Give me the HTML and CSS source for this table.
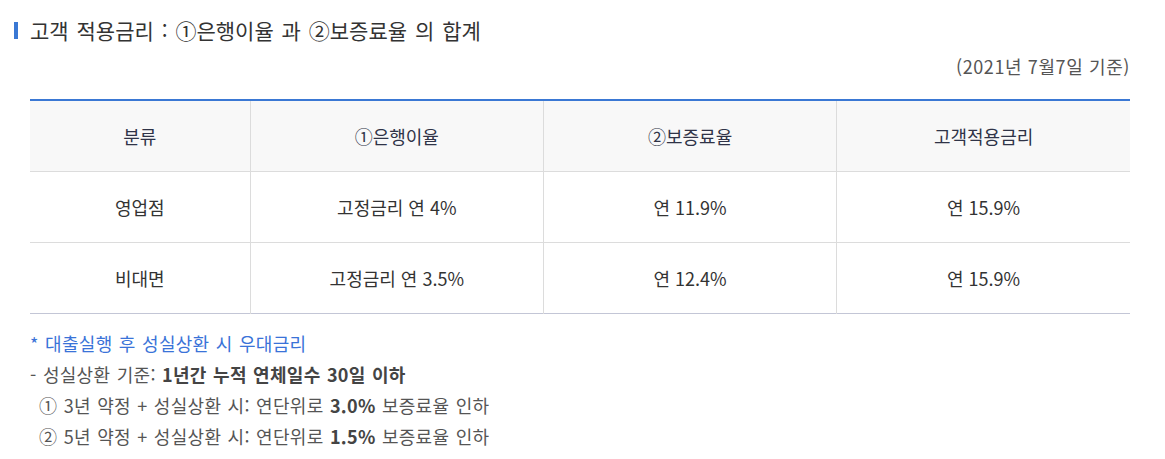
FILE: index.html
```html
<!DOCTYPE html>
<html lang="ko">

<head>
    <meta charset="UTF-8">
    <title>고객 적용금리</title>
    <link rel="stylesheet" href="styles.css">
</head>

<body>
    <div class="rate-box">
        <h3 class="rate-title">고객 적용금리 : ①은행이율 과 ②보증료율 의 합계</h3>
        <p class="rate-date">(2021년 7월7일 기준)</p>

        <table class="rate-table">
            <colgroup>
                <col class="col-type">
                <col class="col-rate">
                <col class="col-rate">
                <col class="col-rate">
            </colgroup>
            <thead>
                <tr>
                    <th>분류</th>
                    <th>①은행이율</th>
                    <th>②보증료율</th>
                    <th>고객적용금리</th>
                </tr>
            </thead>
            <tbody>
                <tr>
                    <td>영업점</td>
                    <td>고정금리 연 4%</td>
                    <td>연 11.9%</td>
                    <td>연 15.9%</td>
                </tr>
                <tr>
                    <td>비대면</td>
                    <td>고정금리 연 3.5%</td>
                    <td>연 12.4%</td>
                    <td>연 15.9%</td>
                </tr>
            </tbody>
        </table>

        <!-- 우대금리 안내 -->
        <ul class="rate-notes">
            <li class="note-blue">* 대출실행 후 성실상환 시 우대금리</li>
            <li>- 성실상환 기준: <b>1년간 누적 연체일수 30일 이하</b></li>
            <li class="note-sub">① 3년 약정 + 성실상환 시: 연단위로 <b>3.0%</b> 보증료율 인하</li>
            <li class="note-sub">② 5년 약정 + 성실상환 시: 연단위로 <b>1.5%</b> 보증료율 인하</li>
        </ul>
    </div>
</body>

</html>
```

FILE: styles.css
```css
body {
    margin: 0;
    background-color: #fff;
    font-family: "Noto Sans CJK KR", "Noto Sans", sans-serif;
    color: #333;
}

.rate-box {
    padding: 16px 35px 0 30px;
}

.rate-title {
    position: relative;
    margin: 0;
    font-size: 21px;
    font-weight: 400;
    line-height: 28px;
    word-spacing: 2px;
    color: #333;
}

.rate-title::before {
    content: "";
    position: absolute;
    left: -16px;
    top: 6px;
    width: 4px;
    height: 17px;
    background-color: #3a78d4;
}

.rate-date {
    margin: 9px 0 0;
    text-align: right;
    font-size: 18px;
    line-height: 26px;
    letter-spacing: 0.6px;
    color: #555;
}

.rate-table {
    width: 1100px;
    margin-top: 20px;
    table-layout: fixed;
    border-collapse: collapse;
    border-top: 2px solid #3a78d4;
    border-bottom: 1px solid #c3c6d6;
    font-size: 18px;
}

.rate-table .col-type {
    width: 220px;
}

.rate-table .col-rate {
    width: 293px;
}

.rate-table th,
.rate-table td {
    height: 70px;
    padding: 0;
    text-align: center;
    border-left: 1px solid #dcdcdc;
    color: #333;
}

.rate-table th:first-child,
.rate-table td:first-child {
    border-left: none;
}

.rate-table th {
    font-weight: 400;
    background-color: #f8f8f8;
    color: #2f3347;
}

.rate-table tbody tr {
    border-top: 1px solid #dcdcdc;
}

.rate-notes {
    list-style: none;
    margin: 14px 0 0;
    padding: 0;
    font-size: 18px;
    line-height: 31px;
    letter-spacing: 0.3px;
    word-spacing: 1px;
    color: #555;
}

.rate-notes b {
    color: #444;
}

.note-blue {
    color: #3a73d8;
}

.note-sub {
    padding-left: 9px;
}
```
